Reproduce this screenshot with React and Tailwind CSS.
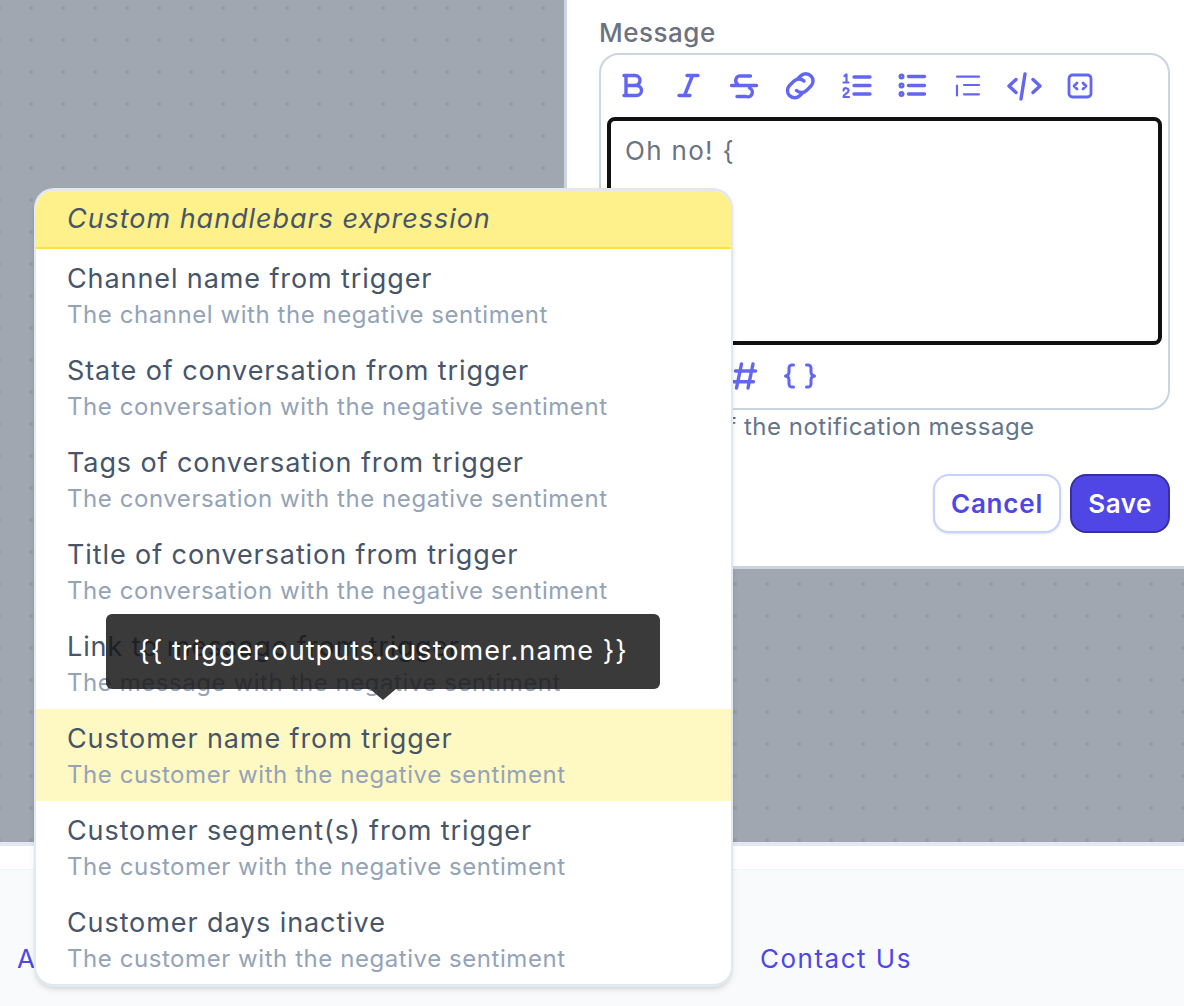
const font = { fontFamily: '"Inter", "Liberation Sans", sans-serif' }

const rows = [
  ["Channel name from trigger", "The channel with the negative sentiment"],
  ["State of conversation from trigger", "The conversation with the negative sentiment"],
  ["Tags of conversation from trigger", "The conversation with the negative sentiment"],
  ["Title of conversation from trigger", "The conversation with the negative sentiment"],
  ["Link to message from trigger", "The message with the negative sentiment"],
  ["Customer name from trigger", "The customer with the negative sentiment", true],
  ["Customer segment(s) from trigger", "The customer with the negative sentiment"],
  ["Customer days inactive", "The customer with the negative sentiment"],
]

function Icon({ children, width = 3.4 }) {
  return (
    <svg
      viewBox="0 0 32 32"
      fill="none"
      stroke="#6366f1"
      strokeWidth={width}
      strokeLinecap="round"
      strokeLinejoin="round"
      className="w-8 h-8 shrink-0 overflow-visible"
    >
      {children}
    </svg>
  )
}

const toolbar = [
  <Icon key="b"><path d="M8 5.5h11a5 5 0 0 1 0 10H10M10 5.5v20M10 15.5h10.500a5 5 0 0 1 0 10H8" /></Icon>,
  <Icon key="i"><path d="M15 5.500h11M7 25.500h11M20.500 5.500l-8 20" /></Icon>,
  <Icon key="s"><path d="M3.500 15.500h25M22.500 6H13a4.500 4.500 0 0 0-3.500 8M21.500 18a4.500 4.500 0 0 1-3.500 8.500H9" /></Icon>,
  <Icon key="l">
    <path d="M14 8.500l2.500-2.500a7.200 7.200 0 0 1 10.500 0 7.200 7.200 0 0 1 0 10l-4.500 4.500a7.200 7.200 0 0 1-10 0" />
    <path d="M19 22.500l-3 3a7.200 7.200 0 0 1-10.500 0 7.200 7.200 0 0 1 0-10l4.500-4.500a7.200 7.200 0 0 1 10 0" />
  </Icon>,
  <Icon key="n">
    <path d="M14 7h16M14 15.500h16M14 24h16" />
    <path d="M4.500 6l2-1.500v7.500M3.500 12.500h5M3.500 20.500a2.500 2.500 0 0 1 5 .5c0 2-5 3-5 6h5.500" strokeWidth="2.200" />
  </Icon>,
  <Icon key="u">
    <path d="M12.500 6.500h16M12.500 15.500h16M12.500 24h16" />
    <circle cx="5.500" cy="6.500" r="1.300" />
    <circle cx="5.500" cy="15.500" r="1.300" />
    <circle cx="5.500" cy="24" r="1.300" />
  </Icon>,
  <Icon key="o" width={2.200}><path d="M5 6.700h22M12 15h15M12 24.300h15M5 15.500v10" /></Icon>,
  <Icon key="c"><path d="M8 9.500L1 16l7 6.500M17 4l-4 25M25 9.500L32 16l-7 6.500" /></Icon>,
  <Icon key="q" width={2.800}>
    <rect x="5" y="5" width="22" height="22" rx="3.500" />
    <path d="M13 13l-3 3 3 3M19 13l3 3-3 3" />
  </Icon>,
]

export default function App() {
  return (
    <div className="relative w-[1184px] h-[1006px] overflow-hidden bg-[#f8fafc]" style={font}>

      {/* BACKDROP + PANEL */}
      <div className="h-[846px] flex justify-end border-b-4 border-[#e2e8f0] bg-[#a0a7b0] bg-[radial-gradient(circle,#959ca9_2px,transparent_2.500px)] bg-[size:32px_32px] bg-[position:15px_-8px]">

        <div className="w-[620px] h-[569px] bg-white border-l-[3px] border-b-[3px] border-[#cbd5e1] pl-[32px] pr-[14px]">

          <div className="h-[53px] pt-[15px] text-[26px] leading-[36px] font-medium tracking-[0.5px] text-[#6b7280]">
            Message
          </div>

          <div className="h-[357px] border-2 border-[#cbd5e1] rounded-[20px] flex flex-col">

            <div className="h-[62px] shrink-0 pl-[15px] flex items-center gap-6">
              {toolbar}
            </div>

            <div className="mx-[6px] h-[228px] border-[4px] border-[#111111] rounded-[8px] px-[14px] py-[11px] text-[26px] leading-[38px] tracking-[1.3px] text-[#6b7280]">
              Oh no! {"{"}
            </div>

            <div className="h-[62px] pl-[15px] flex items-center gap-6">
              <div className="w-8" />
              <div className="w-8" />
              <Icon><path d="M7.500 11h20M5.500 21.700h20M13.500 4l-5 24M25 4l-5 24" /></Icon>
              <Icon width={3}>
                <path d="M9.500 5H8a3 3 0 0 0-3 3v4a4 4 0 0 1-3.500 4A4 4 0 0 1 5 20v4a3 3 0 0 0 3 3h1.500" />
                <path d="M22.500 5H24a3 3 0 0 1 3 3v4a4 4 0 0 0 3.500 4 4 4 0 0 0-3.500 4v4a3 3 0 0 1-3 3h-1.500" />
              </Icon>
            </div>

          </div>

          <div className="mt-[1px] text-[24px] leading-[32px] tracking-[0.5px] text-[#64748b]">
            Contents of the notification message
          </div>

          <div className="mt-[31px] flex justify-end gap-[9px]">
            <button className="w-[128px] h-[59px] rounded-[16px] border-2 border-[#c7d2fe] bg-white text-[26px] font-semibold tracking-[0.8px] text-[#4f46e5] shadow-sm">
              Cancel
            </button>
            <button className="w-[100px] h-[59px] rounded-[16px] border-2 border-[#3730a3] bg-[#4f46e5] text-[26px] font-semibold tracking-[0.5px] text-white">
              Save
            </button>
          </div>

        </div>

      </div>

      {/* FOOTER */}
      <div className="h-[24px] bg-white border-b border-[#f1f5f9]" />
      <div className="h-[136px] pl-[17px] pt-[40px] flex items-center text-[26px] tracking-[1.5px] text-[#4f46e5]">
        <a className="w-[743px]">About</a>
        <a>Contact Us</a>
      </div>

      {/* VARIABLE PICKER */}
      <div className="absolute left-[34px] top-[188px] w-[699px] h-[799px] bg-white border-x-2 border-y-[3px] border-[#e2e8f0] rounded-[20px] overflow-hidden shadow-md">

        <div className="h-[58px] bg-[#fef08a] border-b-2 border-[#fde047] pl-[31px] flex items-center text-[27px] italic tracking-[0.96px] text-[#475569]">
          Custom handlebars expression
        </div>

        {rows.map(([title, desc, active], i) => (
          <div key={i} className={`h-[92px] pl-[31px] pt-[12px] ${active ? "bg-[#fef9c3]" : ""}`}>
            <div className="text-[27px] leading-[36px] tracking-[0.9px] text-[#475569]">{title}</div>
            <div className="text-[24px] leading-[36px] tracking-[0.56px] text-[#94a3b8]">{desc}</div>
          </div>
        ))}

      </div>

      {/* TOOLTIP */}
      <div className="absolute left-[106px] top-[614px] w-[554px] h-[75px] rounded-[6px] bg-[#171717]/85 flex items-center justify-center text-[27px] tracking-[1.05px] text-white">
        {"{{ trigger.outputs.customer.name }}"}
        <div className="absolute left-[264px] top-[75px] w-0 h-0 border-x-[13px] border-x-transparent border-t-[11px] border-t-[#3a3a3a]" />
      </div>

    </div>
  )
}
